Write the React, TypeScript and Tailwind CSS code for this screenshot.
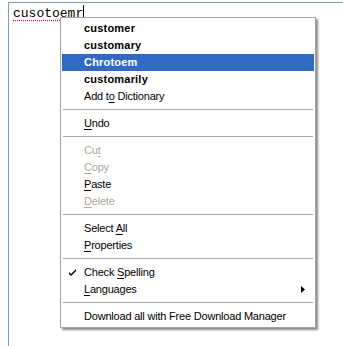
import React from 'react';

type Item =
    | { kind: 'sep' }
    | {
          kind: 'item';
          label: string;
          key?: number;
          bold?: boolean;
          active?: boolean;
          disabled?: boolean;
          checked?: boolean;
          submenu?: boolean;
      };

const items: Item[] = [
    { kind: 'item', label: 'customer', bold: true },
    { kind: 'item', label: 'customary', bold: true },
    { kind: 'item', label: 'Chrotoem', bold: true, active: true },
    { kind: 'item', label: 'customarily', bold: true },
    { kind: 'item', label: 'Add to Dictionary', key: 5 },
    { kind: 'sep' },
    { kind: 'item', label: 'Undo', key: 0 },
    { kind: 'sep' },
    { kind: 'item', label: 'Cut', key: 2, disabled: true },
    { kind: 'item', label: 'Copy', key: 0, disabled: true },
    { kind: 'item', label: 'Paste', key: 0 },
    { kind: 'item', label: 'Delete', key: 0, disabled: true },
    { kind: 'sep' },
    { kind: 'item', label: 'Select All', key: 7 },
    { kind: 'item', label: 'Properties', key: 0 },
    { kind: 'sep' },
    { kind: 'item', label: 'Check Spelling', key: 6, checked: true },
    { kind: 'item', label: 'Languages', key: 0, submenu: true },
    { kind: 'sep' },
    { kind: 'item', label: 'Download all with Free Download Manager' },
];

const Label: React.FC<{ text: string; k?: number }> = ({ text, k }) => {
    if (k === undefined) return <>{text}</>;
    return (
        <>
            {text.slice(0, k)}
            <span className="underline underline-offset-2">{text[k]}</span>
            {text.slice(k + 1)}
        </>
    );
};

const App: React.FC = () => {
    return (
        <div className="relative w-[343px] h-[346px] bg-white overflow-hidden">
            {/* text area */}
            <div className="absolute left-[8px] top-[2px] w-[400px] h-[400px] border-l border-t border-[#7f9db9] bg-white">
                <div className="pl-[4px] pt-[4px] flex items-start">
                    <span
                        className="text-[13px] leading-[14px] text-black"
                        style={{
                            fontFamily: '"Liberation Mono", monospace',
                            textDecorationLine: 'underline',
                            textDecorationStyle: 'dotted',
                            textDecorationColor: '#e02020',
                            textUnderlineOffset: '3px',
                        }}
                    >
                        cusotoemr
                    </span>
                    <span className="w-px h-[15px] bg-black -mt-[2px]" />
                </div>
            </div>

            {/* context menu */}
            <div
                className="absolute left-[60px] top-[17px] w-[256px] border border-[#a3a3a3] bg-white px-px py-[2px] shadow-[2px_2px_2px_rgba(0,0,0,0.45)]"
                style={{ fontFamily: '"Liberation Sans", Arial, sans-serif' }}
            >
                {items.map((it, i) =>
                    it.kind === 'sep' ? (
                        <div key={i} className="pt-[4px] pb-[5px] px-px">
                            <div className="h-px bg-[#a8a8a8]" />
                        </div>
                    ) : (
                        <div
                            key={i}
                            className={`relative flex items-center h-[17px] pl-[22px] text-[11px] ${
                                it.active ? 'bg-[#316ac5] text-white' : it.disabled ? 'text-[#aca899]' : 'text-black'
                            } ${it.bold ? 'font-bold tracking-[0.2px]' : 'tracking-[-0.2px]'}`}
                        >
                            {it.checked && (
                                <svg className="absolute left-[7px] top-[4px]" width="8" height="8" viewBox="0 0 8 8">
                                    <path d="M0 4 L2 6 L7 1 L7 3 L2 8 L0 6 Z" fill="#000" />
                                </svg>
                            )}
                            <span className="whitespace-nowrap">
                                <Label text={it.label} k={it.key} />
                            </span>
                            {it.submenu && (
                                <svg className="absolute right-[9px] top-[5px]" width="4" height="7" viewBox="0 0 4 7">
                                    <path d="M0 0 L4 3.5 L0 7 Z" fill="#000" />
                                </svg>
                            )}
                        </div>
                    )
                )}
            </div>
        </div>
    );
};

export default App;
